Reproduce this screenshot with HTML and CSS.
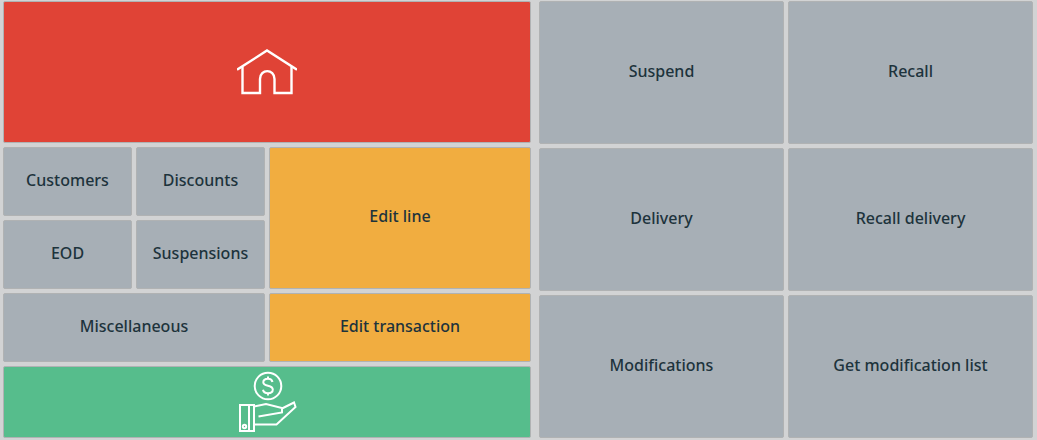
FILE: index.html
```html
<!DOCTYPE html>
<html lang="en">
<head>
<meta charset="utf-8">
<meta name="viewport" content="width=device-width, initial-scale=1">
<title>Point of sale</title>
<link rel="stylesheet" href="styles.css">
</head>
<body>
<main class="pos">
  <section class="pad pad-main" aria-label="Main menu">
    <button type="button" class="key key-home" aria-label="Home">
      <svg class="icon-home" viewBox="0 0 60 46" aria-hidden="true">
        <path d="M0 20.800 L30 1.500 L60 20.800"/>
        <path d="M5.500 18 V44 H23 V30 C23 19.500 37.500 19.500 37.500 30 V44 H54.500 V18"/>
      </svg>
    </button>
    <button type="button" class="key">Customers</button>
    <button type="button" class="key">Discounts</button>
    <button type="button" class="key key-edit key-line">Edit line</button>
    <button type="button" class="key">EOD</button>
    <button type="button" class="key">Suspensions</button>
    <button type="button" class="key key-wide">Miscellaneous</button>
    <button type="button" class="key key-edit">Edit transaction</button>
    <button type="button" class="key key-pay" aria-label="Payment">
      <svg class="icon-pay" viewBox="0 0 60 62" aria-hidden="true">
        <circle cx="31" cy="15" r="13.300"/>
        <path d="M35.500 11 C35 8.700 33.300 7.800 31 7.800 C28 7.800 26.300 9.300 26.300 11.300 C26.300 16 35.800 13.500 35.800 18.500 C35.800 20.800 33.800 22.200 31 22.200 C28.200 22.200 26.500 21 26 18.700 M31 5.500 V8 M31 22 V24.500"/>
        <path d="M3 34 H17 V60 H3 Z M12 34 V60"/>
        <circle cx="7.500" cy="55.500" r="1.700"/>
        <path d="M17 35.500 L29 33 L45 37 V41.500 L21.500 45.500 M45 37.500 L57 31.500 L58.500 36 L39.500 53.500 H17"/>
      </svg>
    </button>
  </section>
  <section class="pad pad-actions" aria-label="Transaction actions">
    <button type="button" class="key">Suspend</button>
    <button type="button" class="key">Recall</button>
    <button type="button" class="key">Delivery</button>
    <button type="button" class="key">Recall delivery</button>
    <button type="button" class="key">Modifications</button>
    <button type="button" class="key">Get modification list</button>
  </section>
</main>
</body>
</html>
```

FILE: styles.css
```css
* {
  box-sizing: border-box;
}

body {
  margin: 0;
  background: #d2d3d4;
  font-family: "Noto Sans", "Open Sans", sans-serif;
}

.pos {
  display: grid;
  grid-template-columns: 528fr 494fr;
  gap: 8px;
  min-height: 100vh;
  padding: 1px 4px 2px 3px;
}

.pad {
  display: grid;
  gap: 4px;
}

.pad-main {
  grid-template-columns: repeat(4, 1fr);
  grid-template-rows: repeat(5, 69fr) 72fr;
}

.pad-actions {
  grid-template-columns: repeat(2, 1fr);
  grid-template-rows: repeat(3, 1fr);
}

.key {
  display: flex;
  align-items: center;
  justify-content: center;
  min-width: 0;
  min-height: 0;
  padding: 0 4px 4px;
  border: 1px solid #b0b2b3;
  border-radius: 2px;
  background: #a7afb6;
  color: #1d333c;
  font-family: inherit;
  font-size: 16px;
  font-weight: 500;
  line-height: 24px;
}

.key-home {
  grid-column: span 4;
  grid-row: span 2;
  padding: 0;
  background: #e04336;
}

.key-edit {
  grid-column: span 2;
  background: #f1ad40;
}

.key-line {
  grid-row: span 2;
}

.key-wide {
  grid-column: span 2;
}

.key-pay {
  grid-column: span 4;
  padding: 0;
  background: #56bd8c;
}

.icon-home,
.icon-pay {
  fill: none;
  stroke: #fff;
  stroke-width: 2;
}

.icon-home {
  width: 60px;
  height: 46px;
  stroke-width: 2.4;
}

.icon-pay {
  width: 60px;
  height: 62px;
}
```
